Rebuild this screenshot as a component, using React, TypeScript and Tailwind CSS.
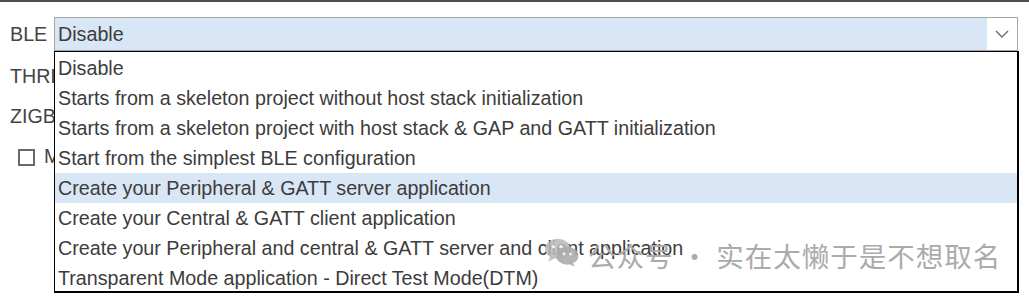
import React from "react";

const options = [
  "Disable",
  "Starts from a skeleton project without host stack initialization",
  "Starts from a skeleton project with host stack & GAP and GATT initialization",
  "Start from the simplest BLE configuration",
  "Create your Peripheral & GATT server application",
  "Create your Central & GATT client application",
  "Create your Peripheral and central & GATT server and client application",
  "Transparent Mode application - Direct Test Mode(DTM)",
];

function WeChatIcon() {
  return (
    <svg width="36" height="30" viewBox="0 0 34 28">
      <ellipse cx="13" cy="10" rx="12" ry="9.5" fill="#b8b8b8" fillOpacity="0.85" />
      <path d="M6 17 L4 22 L11 18.5 Z" fill="#b8b8b8" fillOpacity="0.85" />
      <ellipse cx="22" cy="16.5" rx="10.5" ry="8.5" fill="#acacac" fillOpacity="0.9" />
      <path d="M27 23 L29 27 L23 24 Z" fill="#acacac" fillOpacity="0.9" />
      <circle cx="9" cy="8" r="1.6" fill="#fff" fillOpacity="0.8" />
      <circle cx="16" cy="8" r="1.6" fill="#fff" fillOpacity="0.8" />
      <circle cx="19" cy="15" r="1.4" fill="#fff" fillOpacity="0.8" />
      <circle cx="25" cy="15" r="1.4" fill="#fff" fillOpacity="0.8" />
    </svg>
  );
}

export default function App() {
  return (
    <div
      className="relative w-[1029px] h-[296px] overflow-hidden bg-white border-t-2 border-[#4d4d4d] text-[#3c3c3c]"
      style={{ fontFamily: '"Liberation Sans", Arial, sans-serif' }}
    >
      <div className="flex flex-col pt-[15px]">
        <div className="flex items-center h-[34px]">
          <div className="w-[54px] pl-[10px] pt-[1px] text-[19.7px] text-[#444]">BLE</div>
          <div className="flex h-[34px] w-[964px] border border-[#a6a6a6] bg-[#d9e6f5]">
            <div className="flex-1 pl-[3px] text-[19.7px] leading-[32px] text-[#3c3c3c]">Disable</div>
            <div className="w-[30px] bg-white flex items-center justify-center">
              <svg width="16" height="10" viewBox="0 0 16 10">
                <path d="M2 2 L8 8 L14 2" fill="none" stroke="#6b6b6b" strokeWidth="1.4" />
              </svg>
            </div>
          </div>
        </div>
        <div className="w-[54px] overflow-hidden whitespace-nowrap flex items-center h-[40px] mt-[6px] pl-[10px] text-[19.7px] text-[#444]">
          THREADX
        </div>
        <div className="w-[54px] overflow-hidden whitespace-nowrap flex items-center h-[40px] pl-[10px] text-[19.7px] text-[#444]">
          ZIGBEE
        </div>
        <div className="w-[54px] overflow-hidden whitespace-nowrap flex items-center h-[40px] pl-[18px] gap-[9px] text-[19.7px] text-[#444]">
          <div className="shrink-0 w-[17px] h-[17px] border-2 border-[#6a6a6a] bg-white" />
          <span>Matter</span>
        </div>
      </div>

      <div className="absolute left-[54px] top-[49px] w-[965px] h-[242px] border border-black border-r-2 border-b-2 bg-white pt-[1px]">
        {options.map((o, i) => (
          <div
            key={i}
            className={
              "h-[30px] pl-[3px] text-[19.7px] leading-[30px] whitespace-nowrap text-[#3c3c3c] " +
              (i === 4 ? "bg-[#d9e6f5]" : "")
            }
          >
            {o}
          </div>
        ))}
      </div>

      <div
        className="absolute left-[544px] top-[233px] flex items-start gap-[8px] text-[#ababab] text-[27.5px] leading-[40px] tracking-[1px]"
        style={{ fontFamily: '"Noto Sans CJK SC", "Noto Sans", sans-serif' }}
      >
        <div className="pt-[3px]">
          <WeChatIcon />
        </div>
        <span className="whitespace-nowrap">公众号 · 实在太懒于是不想取名</span>
      </div>
    </div>
  );
}
